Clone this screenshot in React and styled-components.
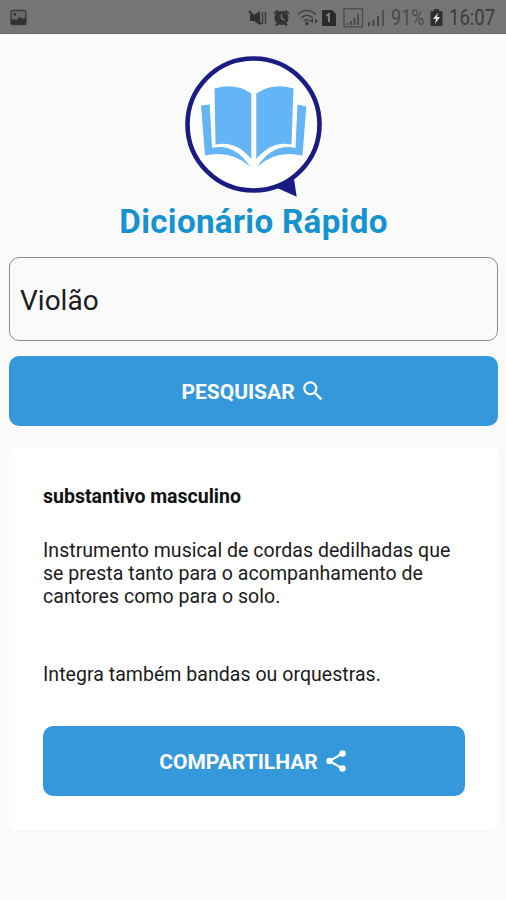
import React from "react"
import styled, { createGlobalStyle } from "styled-components"

const GlobalStyle = createGlobalStyle`
  * {
    box-sizing: border-box;
  }
  body {
    margin: 0;
    background: #fafafa;
    font-family: Roboto, sans-serif;
  }
`

const Screen = styled.div`
  width: 506px;
  height: 900px;
  overflow: hidden;
  background: #fafafa;
`

const StatusBar = styled.header`
  display: flex;
  align-items: center;
  justify-content: space-between;
  height: 34px;
  padding: 2px 11px 0 10px;
  background: #757575;
  border-bottom: 1px solid #686868;
  color: #333333;

  svg {
    display: block;
  }
`

const StatusIcons = styled.div`
  display: flex;
  align-items: center;
`

const StatusIcon = styled.svg`
  height: 20px;
  margin-right: ${(props) => props.$gap}px;
  flex: none;
`

const StatusText = styled.span`
  width: ${(props) => props.$width}px;
  margin-right: ${(props) => props.$gap || 0}px;
  font-size: 22px;
  line-height: 24px;
  white-space: nowrap;
  transform: scaleX(${(props) => props.$squeeze});
  transform-origin: left center;
  color: ${(props) => props.color};
`

const Content = styled.main`
  display: flex;
  flex-direction: column;
  padding: 11px 8px 0 9px;
`

const Logo = styled.svg`
  display: block;
  width: 170px;
  height: 160px;
  margin-left: 161px;
`

const Title = styled.h1`
  margin: -2px 0 0;
  height: 38px;
  font-size: 33.2px;
  line-height: 38px;
  font-weight: 700;
  letter-spacing: 0.3px;
  text-align: center;
  color: #1593cf;
`

const SearchInput = styled.input`
  width: 100%;
  height: 84px;
  margin: 16px 0 15px;
  padding: 2px 10px 0;
  border: 1px solid #8c8c8c;
  border-radius: 10px;
  outline: none;
  background: #fafafa;
  font-family: Roboto, sans-serif;
  font-size: 28px;
  color: #1c1c1c;
`

const Button = styled.button`
  display: flex;
  align-items: center;
  justify-content: center;
  gap: 5px;
  width: 100%;
  height: 70px;
  padding: 2px 0 0;
  border: 0;
  border-radius: 10px;
  background: #3498db;
  font-family: Roboto, sans-serif;
  font-size: 21px;
  font-weight: 700;
  color: #ffffff;

  svg {
    display: block;
    margin-top: -2px;
  }
`

const Card = styled.section`
  height: 382px;
  margin-top: 22px;
  padding: 37px 33px 0 34px;
  border-radius: 6px;
  background: #ffffff;
`

const WordClass = styled.h2`
  margin: 0 0 30px;
  font-size: 19.5px;
  line-height: 24px;
  font-weight: 700;
  color: #111111;
`

const Meaning = styled.p`
  margin: 0 0 ${(props) => props.$bottom}px;
  font-size: 19.5px;
  line-height: 23.2px;
  letter-spacing: 0.04px;
  white-space: nowrap;
  color: #1b1b1b;
`

const PictureIcon = () => (
  <svg width="18" height="18" viewBox="0 0 18 18">
    <rect x="1" y="1.5" width="15" height="14" rx="1.5" fill="#696969" stroke="#3a3a3a" strokeWidth="1.4" />
    <path d="M1 11l3-1 2 1 4-3 2.5 2L15 8.5l1 1v6H1z" fill="#333" />
    <circle cx="5" cy="5.5" r="1.4" fill="#333" />
  </svg>
)

const MuteIcon = () => (
  <StatusIcon width="20" viewBox="0 0 20 20" $gap={5}>
    <path d="M2 7h4l6-4v14l-6-4H2z" fill="#303030" />
    <path d="M1 3l12 13" stroke="#303030" strokeWidth="2" />
    <path
      d="M15 4l-1 2 1 2-1 2 1 2-1 2 1 2M18 4l-1 2 1 2-1 2 1 2-1 2 1 2"
      fill="none"
      stroke="#3b3b3b"
      strokeWidth="1.3"
    />
  </StatusIcon>
)

const AlarmIcon = () => (
  <StatusIcon width="17" viewBox="0 0 17 20" $gap={7}>
    <circle cx="8.5" cy="10" r="7" fill="#333" />
    <path d="M1 5.5l4-3M16 5.5l-4-3M3 17.5l2-2M14 17.5l-2-2" stroke="#333" strokeWidth="2" />
    <path d="M8.5 6v4.5l3 1.5" fill="none" stroke="#757575" strokeWidth="1.4" />
  </StatusIcon>
)

const WifiIcon = () => (
  <StatusIcon width="22" viewBox="0 0 22 20" $gap={2}>
    <path d="M1 6.5q9-8 18 0M4 10q6-5.5 12 0M7 13q3-3 6 0" fill="none" stroke="#424242" strokeWidth="1.6" />
    <circle cx="10" cy="15.5" r="1.8" fill="#3b3b3b" />
    <path d="M13 13l3-2.5v5zM21 13l-3-2.5v5z" fill="#3b3b3b" />
  </StatusIcon>
)

const SimIcon = () => (
  <StatusIcon width="15" viewBox="0 0 15 20" $gap={7}>
    <path d="M1 2h10l4 4v12H1z" fill="#2b2b2b" />
    <path d="M5.5 8l2.5-2v8" fill="none" stroke="#858585" strokeWidth="1.8" />
  </StatusIcon>
)

const BoxedSignalIcon = () => (
  <StatusIcon width="21" viewBox="0 0 21 20" $gap={3}>
    <rect x="1" y="0.8" width="18.5" height="18" fill="none" stroke="#4b4b4b" strokeWidth="1.3" />
    <path d="M4.5 17v-2M8 17v-4M11.5 17v-7M15 17V6" stroke="#4b4b4b" strokeWidth="2" />
  </StatusIcon>
)

const SignalIcon = () => (
  <StatusIcon width="18" viewBox="0 0 18 20" $gap={6}>
    <path d="M2 18v-4M6.5 18v-6M11 18V8" stroke="#444" strokeWidth="2" />
    <path d="M16 18V2" stroke="#505050" strokeWidth="2" />
  </StatusIcon>
)

const BatteryIcon = () => (
  <StatusIcon width="13" viewBox="0 0 13 20" $gap={6}>
    <path d="M4 1h5v2h2.5q1 0 1 1v13q0 1-1 1h-10q-1 0-1-1V4q0-1 1-1H4z" fill="#303030" />
    <path d="M8 5l-5 6h3l-1 5 5-7H7z" fill="#e2e2e2" />
  </StatusIcon>
)

const BookLogo = () => (
  <Logo viewBox="0 0 170 160">
    <circle cx="83.5" cy="79.5" r="66" fill="#fff" stroke="#1b1b84" strokeWidth="4.6" />
    <path d="M105 142L123.5 131L126.7 151.8Z" fill="#1b1b84" />
    <g fill="#64b5f6">
      <path d="M44.5 43.5Q65 37 81.3 48.5V114Q66 95 45.5 99.5Z" />
      <path d="M123.5 43.5Q103 37 86.3 48.5V114Q102 95 121.5 99.5Z" />
      <path d="M31 60.5L39.7 59.5L42 103Q64 98 80 121.5Q61 104.5 35 110.5Z" />
      <path d="M136.3 61.5L127.5 59.5L125.5 103Q103 98 87.5 121.5Q106 104.5 132.5 110.5Z" />
    </g>
  </Logo>
)

const SearchIcon = () => (
  <svg width="26" height="26" viewBox="0 0 24 24" fill="none" stroke="#fff" strokeWidth="2">
    <circle cx="9.5" cy="9.5" r="5.5" />
    <path d="M13.6 13.6L19.8 19.8" strokeWidth="2.2" />
  </svg>
)

const ShareIcon = () => (
  <svg width="26" height="26" viewBox="0 0 24 24" fill="#fff">
    <path d="M18 5L6 12l12 7" fill="none" stroke="#fff" strokeWidth="2" />
    <circle cx="18" cy="5" r="3" />
    <circle cx="6" cy="12" r="3" />
    <circle cx="18" cy="19" r="3" />
  </svg>
)

const App = () => {
  return (
    <>
      <GlobalStyle />
      <Screen>
        <StatusBar>
          <PictureIcon />
          <StatusIcons>
            <MuteIcon />
            <AlarmIcon />
            <WifiIcon />
            <SimIcon />
            <BoxedSignalIcon />
            <SignalIcon />
            <StatusText $width={33} $gap={6} $squeeze={0.82} color="#494949">
              91%
            </StatusText>
            <BatteryIcon />
            <StatusText $width={46} $squeeze={0.84} color="#3c3c3c">
              16:07
            </StatusText>
          </StatusIcons>
        </StatusBar>
        <Content>
          <BookLogo />
          <Title>Dicionário Rápido</Title>
          <SearchInput type="text" defaultValue="Violão" />
          <Button>
            PESQUISAR
            <SearchIcon />
          </Button>
          <Card>
            <WordClass>substantivo masculino</WordClass>
            <Meaning $bottom={54}>
              Instrumento musical de cordas dedilhadas que
              <br />
              se presta tanto para o acompanhamento de
              <br />
              cantores como para o solo.
            </Meaning>
            <Meaning $bottom={40}>Integra também bandas ou orquestras.</Meaning>
            <Button>
              COMPARTILHAR
              <ShareIcon />
            </Button>
          </Card>
        </Content>
      </Screen>
    </>
  )
}

export default App
